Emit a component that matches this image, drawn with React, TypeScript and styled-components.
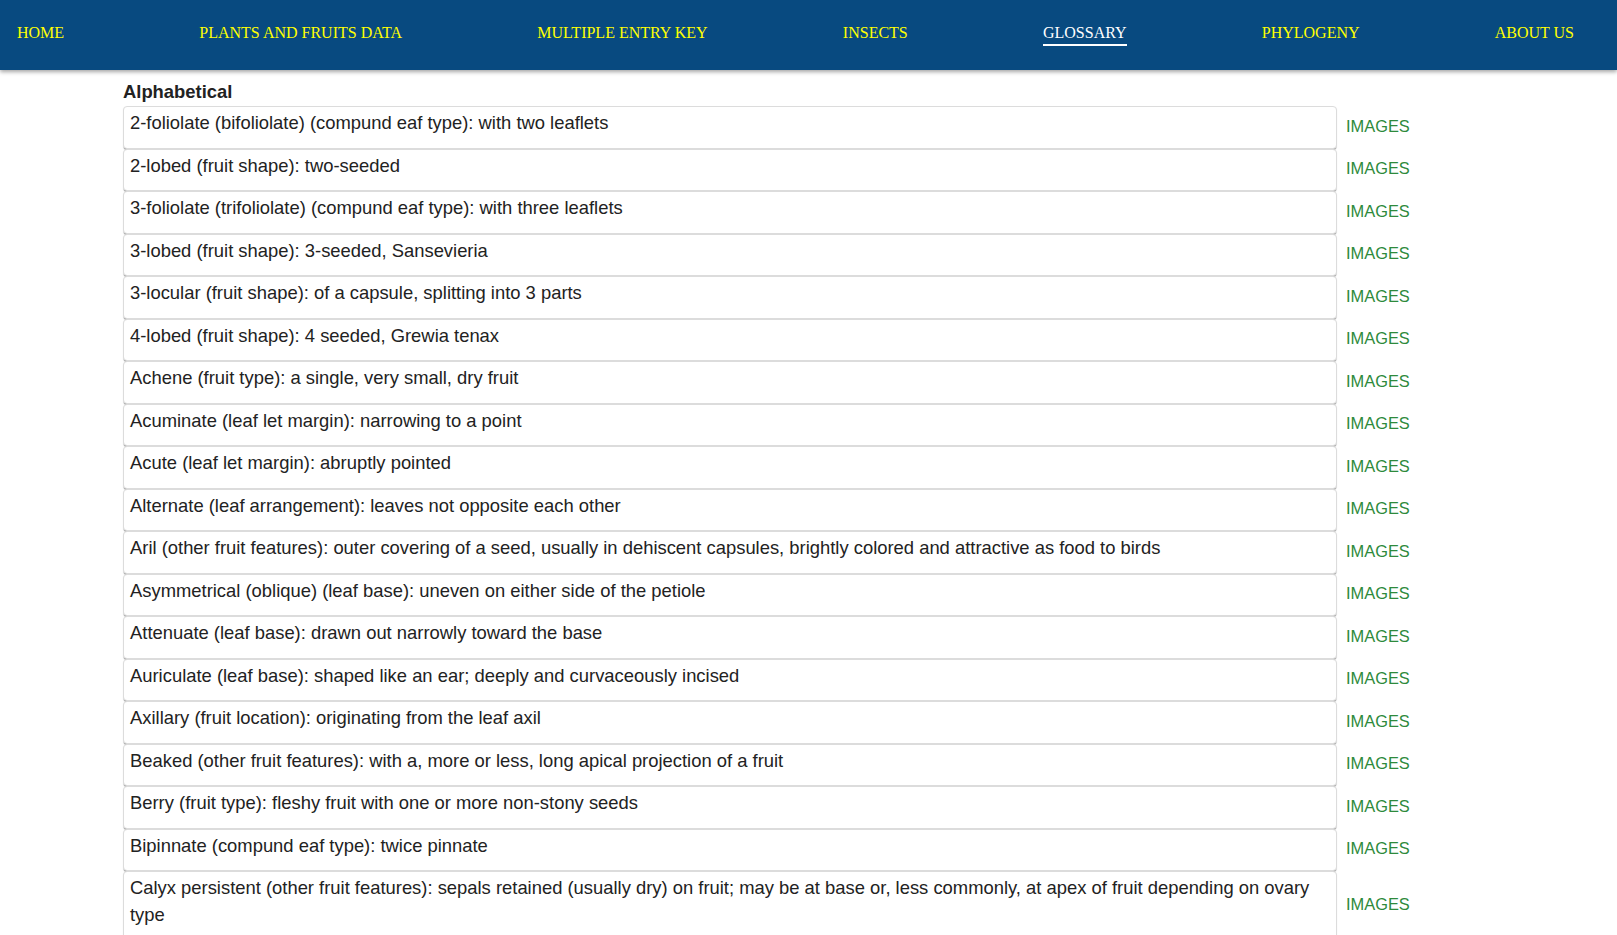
import React from "react";
import styled, { createGlobalStyle } from "styled-components";

const GlobalStyle = createGlobalStyle`
  html, body {
    margin: 0;
    padding: 0;
    background: #ffffff;
  }
  body {
    font-family: "Liberation Sans", Arial, sans-serif;
    overflow: hidden;
  }
`;

const NavBar = styled.nav`
  height: 70px;
  box-sizing: border-box;
  background: #084a80;
  display: flex;
  justify-content: space-between;
  align-items: flex-start;
  padding: 24px 43px 0 17px;
  box-shadow: 0 2px 4px rgba(0, 0, 0, 0.35);
  position: relative;
  z-index: 1;
`;

const NavItem = styled.a<{ $active?: boolean }>`
  font-family: "Liberation Serif", "Times New Roman", serif;
  font-size: 16px;
  line-height: 18px;
  color: ${(p) => (p.$active ? "#ffffff" : "#ffff00")};
  text-decoration: none;
  text-transform: uppercase;
  padding-bottom: 2px;
  border-bottom: 2px solid ${(p) => (p.$active ? "#ffffff" : "transparent")};
  white-space: nowrap;
`;

const Main = styled.main`
  padding: 11px 0 0 123px;
`;

const Heading = styled.h3`
  margin: 0 0 4px 0;
  font-size: 18.4px;
  font-weight: bold;
  line-height: 21px;
  color: #222;
`;

const List = styled.div`
  display: flex;
  flex-direction: column;
`;

const Row = styled.div`
  display: grid;
  grid-template-columns: 1214px auto;
  column-gap: 9px;
  align-items: center;
`;

const Card = styled.div`
  box-sizing: border-box;
  min-height: 42.5px;
  border: 1px solid #dcdcdc;
  border-radius: 4px;
  padding: 2px 6px 11.5px 6px;
  background: #fff;
  box-shadow: 0 2px 1px -1px rgba(0, 0, 0, 0.35), 0 1px 1px 0 rgba(0, 0, 0, 0.14);
  font-size: 18.4px;
  line-height: 27px;
  color: #222;
`;

const ImagesLink = styled.a`
  font-size: 16.4px;
  color: #2e8a3c;
  text-decoration: none;
  text-transform: uppercase;
  margin-top: -2px;
`;

const navItems = [
  "Home",
  "Plants and Fruits Data",
  "Multiple Entry Key",
  "Insects",
  "Glossary",
  "Phylogeny",
  "About Us",
];

const entries = [
  "2-foliolate (bifoliolate) (compund eaf type): with two leaflets",
  "2-lobed (fruit shape): two-seeded",
  "3-foliolate (trifoliolate) (compund eaf type): with three leaflets",
  "3-lobed (fruit shape): 3-seeded, Sansevieria",
  "3-locular (fruit shape): of a capsule, splitting into 3 parts",
  "4-lobed (fruit shape): 4 seeded, Grewia tenax",
  "Achene (fruit type): a single, very small, dry fruit",
  "Acuminate (leaf let margin): narrowing to a point",
  "Acute (leaf let margin): abruptly pointed",
  "Alternate (leaf arrangement): leaves not opposite each other",
  "Aril (other fruit features): outer covering of a seed, usually in dehiscent capsules, brightly colored and attractive as food to birds",
  "Asymmetrical (oblique) (leaf base): uneven on either side of the petiole",
  "Attenuate (leaf base): drawn out narrowly toward the base",
  "Auriculate (leaf base): shaped like an ear; deeply and curvaceously incised",
  "Axillary (fruit location): originating from the leaf axil",
  "Beaked (other fruit features): with a, more or less, long apical projection of a fruit",
  "Berry (fruit type): fleshy fruit with one or more non-stony seeds",
  "Bipinnate (compund eaf type): twice pinnate",
  "Calyx persistent (other fruit features): sepals retained (usually dry) on fruit; may be at base or, less commonly, at apex of fruit depending on ovary type",
];

export default function App() {
  return (
    <>
      <GlobalStyle />
      <NavBar>
        {navItems.map((item) => (
          <NavItem key={item} href="#" $active={item === "Glossary"}>
            {item}
          </NavItem>
        ))}
      </NavBar>
      <Main>
        <Heading>Alphabetical</Heading>
        <List>
          {entries.map((e) => (
            <Row key={e}>
              <Card>{e}</Card>
              <ImagesLink href="#">Images</ImagesLink>
            </Row>
          ))}
        </List>
      </Main>
    </>
  );
}
